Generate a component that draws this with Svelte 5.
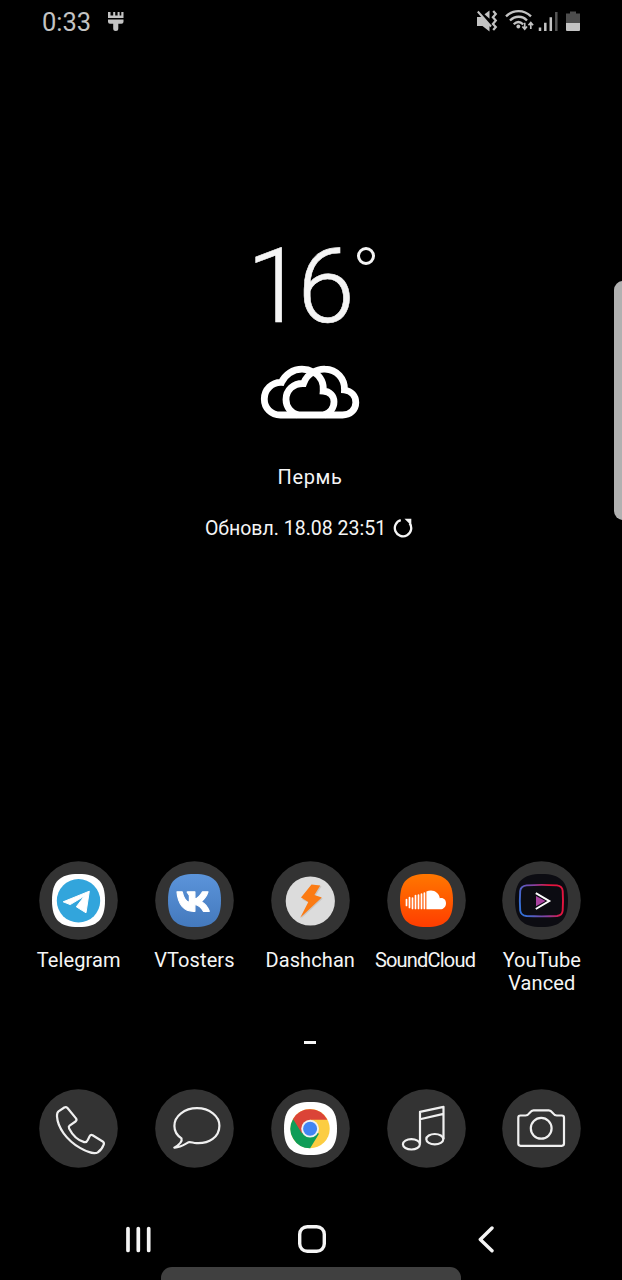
<script>
    const temperature = 16;
    const city = 'Пермь';
    const updated = 'Обновл. 18.08 23:51';

    // Home screen shortcuts
    const apps = [
        { id: 'telegram', label: 'Telegram' },
        { id: 'vtosters', label: 'VTosters' },
        { id: 'dashchan', label: 'Dashchan' },
        { id: 'soundcloud', label: 'SoundCloud' },
        { id: 'vanced', label: 'YouTube Vanced' },
    ];

    // Icons pinned to the dock
    const dock = ['phone', 'messages', 'chrome', 'music', 'camera'];

    // One squircle shared by all adaptive icons
    const squircle = 'M39.5 13C58.5 13 66 20.5 66 39.5S58.5 66 39.5 66 13 58.5 13 39.5 20.5 13 39.5 13Z';
</script>

{#snippet icon(id)}
    <svg class="icon" viewBox="0 0 79 79">
        <circle cx="39.5" cy="39.5" r="39.3" fill="#333" />
        {#if id === 'telegram'}
            <path d={squircle} fill="#fff" />
            <circle cx="39.5" cy="39.8" r="21.7" fill="#32a5dc" />
            <path d="M24.2 40.8 50.3 30.2 47 51.8 37.3 45.8 45.5 35 31.2 43.6Z" fill="#fff" stroke="#fff" stroke-width="1" stroke-linejoin="round" />
        {:else if id === 'vtosters'}
            <defs>
                <linearGradient id="vk" x1="0" y1="0" x2="0" y2="1">
                    <stop offset="0" stop-color="#5b94da" />
                    <stop offset="1" stop-color="#4479bd" />
                </linearGradient>
            </defs>
            <path d={squircle} fill="url(#vk)" />
            <path d="M22 30.8H27.2C28.5 36.5 31 40.5 34.4 41.4V34.5L32.2 31.2Q32 30.8 32.7 30.8H39.9V38.3C43 37.3 45.6 34 47.5 30.8H53C51.8 34.8 49.2 38.2 46.3 40.4 49.5 42.2 52.7 45.6 54.3 50.3H48.4C46.4 46.8 43.6 44.2 39.9 43.5V50.3H38.6C29.2 50.3 23 43.5 22 30.8Z" fill="#fff" stroke="#fff" stroke-width="1.2" stroke-linejoin="round" />
        {:else if id === 'dashchan'}
            <circle cx="39.3" cy="40" r="24.6" fill="#dcdcdc" />
            <path d="M39.5 23 49.8 24.2 43.5 34.2 51 36.5 29.2 56.7 37.3 41 30.5 37.5Z" fill="#b9b3ad" opacity=".55" transform="translate(.8 1)" />
            <path d="M40.5 23.5 49.3 24.5 43.4 34.1 50.8 36.4 29.2 56.7 37.3 41 30 36.5Z" fill="#fb7b14" />
        {:else if id === 'soundcloud'}
            <defs>
                <linearGradient id="sc" x1="0" y1="0" x2="0" y2="1">
                    <stop offset="0" stop-color="#ff7700" />
                    <stop offset="1" stop-color="#ff3d00" />
                </linearGradient>
            </defs>
            <path d={squircle} fill="url(#sc)" />
            <path d="M19.5 38.5V44.5M22.5 36.5V46.5M25.5 37V47.5M28.5 34.5V47.5M31.5 34V47.5M34.5 33V47.5M37.4 32V47.5" stroke="#fff" stroke-width="1.7" stroke-linecap="round" fill="none" />
            <path d="M39.4 30.6C45.5 27.5 52 31.2 52.8 37.2 56.8 36.4 59 39.2 59 42.2 59 45.7 56.6 48.3 53.2 48.3H39.4Z" fill="#fff" />
        {:else if id === 'vanced'}
            <defs>
                <linearGradient id="yt" x1="0" y1=".65" x2="1" y2=".35">
                    <stop offset="0" stop-color="#3470d8" />
                    <stop offset=".48" stop-color="#87409f" />
                    <stop offset=".8" stop-color="#e3143e" />
                </linearGradient>
            </defs>
            <path d={squircle} fill="#0c0c12" />
            <path d="M24.5 24.4Q39.5 23.4 55 24.4 60.3 25 60.7 30 61.3 40 60.7 49.5 60.3 54.3 55 55 39.5 55.8 24.5 55 18.8 54.3 18.2 49.5 17.5 40 18.2 30 18.8 25 24.5 24.4Z" fill="none" stroke="url(#yt)" stroke-width="1.9" />
            <path d="M34 35 43.5 40 34 45.3Z" fill="#a942a0" />
            <path d="M33.8 32.2 47.2 40 33.8 48" fill="none" stroke="#fff" stroke-width="2" />
        {:else if id === 'phone'}
            <path class="line" d="M19.5 22.4 25.3 18.5Q27 17.5 28.5 19L37 29.4Q38.2 31.3 36.5 32.5L30.6 36.7Q29.3 37.8 30.1 39.4C33.5 46 39.5 51.4 45.2 53.1 47.4 53.6 48.2 52.4 48.8 50.9L50.6 47.2Q51.6 45.4 53.6 46.2L63.3 52.2Q65.6 53.8 64.7 55.7C63.6 58.6 61.3 61.8 58.9 63.3 55.7 65.4 48 63 41 58.9 27.5 50.8 18.6 38.5 18 27.4 17.9 25 18.1 23.4 19.5 22.4Z" />
        {:else if id === 'messages'}
            <path class="line" d="M42 19.2C54.5 19.2 64.4 27 64.4 36.7 64.4 47.9 54.3 54.7 41.5 54.1 37.8 53.9 35.8 52.6 33.5 53.2 29.5 55.5 24.6 58.9 19.3 58.6 23.4 56.2 27.5 52.5 26.5 49.3 22.2 46.5 19.4 42 19.4 36.9 19.4 27.2 29.5 19.2 42 19.2Z" />
        {:else if id === 'chrome'}
            <path d={squircle} fill="#fff" />
            <circle cx="39.1" cy="39.7" r="19.6" fill="#fccd42" />
            <path d="M39.1 39.7 48 44.8 39.1 59.3A19.6 19.6 0 0 1 22.1 29.9Z" fill="#0f9d58" />
            <path d="M22.1 29.9A19.6 19.6 0 0 1 56.4 30.8H39.1L31 44.6Z" fill="#db4437" />
            <circle cx="39.1" cy="39.7" r="8.9" fill="#f1f1f1" />
            <circle cx="39.1" cy="39.7" r="7" fill="#4285f4" />
        {:else if id === 'music'}
            <g class="line">
                <path d="M33 54.8V22.8L56.5 17.8V50M33 30.2 56.5 24.9" />
                <ellipse cx="24.4" cy="55.3" rx="8.5" ry="5.2" />
                <ellipse cx="47.8" cy="50.2" rx="8.5" ry="5.2" />
            </g>
        {:else}
            <g class="line">
                <path d="M18.5 26.5H23.5C27.8 26.5 27.5 21.3 31.5 21.3H46.8C50.8 21.3 50.5 26.5 54.8 26.5H59.8Q62 26.5 62 28.7V54.6Q62 56.8 59.8 56.8H18.5Q16.3 56.8 16.3 54.6V28.7Q16.3 26.5 18.5 26.5Z" />
                <circle cx="39.2" cy="39.3" r="10.4" />
            </g>
        {/if}
    </svg>
{/snippet}

<main>
    <header class="status">
        <span class="clock">0:33</span>
        <svg class="brush" width="18" height="20" viewBox="0 0 18 20" fill="#c3c3c3">
            <path d="M1 0H3.5V3.5H6.2V0H8.2V3.5H10.6V0H12.6V3.5H14.3V0H16.5V6H1ZM1 7.6H16.5V9.8Q16.5 11.8 14.5 11.8H11.3V16.5Q11.3 19 8.8 19 6.2 19 6.2 16.5V11.8H3Q1 11.8 1 9.8Z" />
        </svg>
        <svg class="indicators" width="106" height="24" viewBox="0 0 106 24" fill="none" stroke="#c3c3c3">
            <path d="M2 8H7L14.5 15.5V22.5L7.5 17H2Z" fill="#c3c3c3" stroke="none" />
            <path d="M2.8 2.5 16 17.5" stroke-width="2" />
            <path d="M9.5 5.2 14.5 1.5V9.8Z" fill="#c3c3c3" stroke="none" />
            <path d="M18.2 2 20.8 5 17.9 8.3 20.8 11.5 17.9 15 20.8 18 18.2 21" stroke-width="2.2" />
            <path d="M31 7.4C38 .4 49 .4 56 7.4M35 11.5C40 6.5 47.5 6.5 52 11.5M38.7 15.3Q43.3 10.8 48.2 15.3" stroke-width="2.3" />
            <circle cx="43.3" cy="17.5" r="1.9" fill="#c3c3c3" stroke="none" />
            <path d="M49.7 13.8V20M47.4 17.5 49.7 20.2 52 17.5M55.8 20V14M53.5 16.2 55.8 13.5 58.1 16.2" stroke-width="1.7" />
            <path d="M65 18.5V22M70.3 13.8V22M75.8 8.2V22" stroke-width="2.5" />
            <path d="M81.3 3V22" stroke="#555" stroke-width="2.5" />
            <path d="M91 4.5H95V2.5H101V4.5H105V14H91Z" fill="#4d4d4d" stroke="none" />
            <path d="M91 14H105V21Q105 22 104 22H92Q91 22 91 21Z" fill="#c3c3c3" stroke="none" />
        </svg>
    </header>

    <section class="weather">
        <div class="temperature">{temperature}<span class="degree"></span></div>
        <svg class="clouds" width="100" height="56" viewBox="0 0 100 56">
            <path d="M20.5 51C11 51 4.3 44 4.3 35 4.3 25.5 12 18 21.5 18.4 25 10.5 33 5.2 42 5.2 47 5.2 50.5 6.5 53.8 8.2 57 6 61 5 65 5.2 77 5.5 85 15 84.5 26 91 27 95.8 31.8 95.8 38.5 95.8 46 90 51 82.5 51Z" />
            <path d="M38 51C31 49 26 43 26 35.5 26 26 33.5 19.2 43.5 19.5 45.5 14 49.2 10 53.8 8 60 12 64 18 63.2 27 70 27.5 74 32 74 37.8 74 44 70 49 64 51" />
        </svg>
        <div class="city">{city}</div>
        <div class="updated">
            <span>{updated}</span>
            <svg width="20" height="20" viewBox="0 0 20 20">
                <path d="M7.8 2.2A8.2 8.2 0 1 0 16.6 5.2" fill="none" stroke="#f5f5f5" stroke-width="2.3" />
                <path d="M11.5.8H18.3V7.5Z" fill="#f5f5f5" />
            </svg>
        </div>
    </section>

    <section class="apps">
        {#each apps as app}
            <div class="app">
                {@render icon(app.id)}
                <span class="label {app.id}">{app.label}</span>
            </div>
        {/each}
    </section>

    <div class="page-mark"></div>

    <section class="dock">
        {#each dock as id}
            {@render icon(id)}
        {/each}
    </section>

    <nav>
        <svg width="26" height="28" viewBox="0 0 26 28">
            <path d="M2 3.5V25.5M12.3 3.5V25.5M22.7 3.5V25.5" stroke-width="3.7" />
        </svg>
        <svg class="home" width="28" height="28" viewBox="0 0 28 28">
            <rect x="1.7" y="1.7" width="24.6" height="24.6" rx="7.5" stroke-width="3.4" />
        </svg>
        <svg width="18" height="28" viewBox="0 0 18 28">
            <path d="M14 3 2.3 14.5 14 25.8" stroke-width="3.4" stroke-linejoin="round" />
        </svg>
    </nav>

    <div class="edge-handle"></div>
    <div class="bottom-handle"></div>
</main>

<style>
    :global(body) {
        background: #000;
    }

    main {
        position: relative;
        display: flex;
        flex-direction: column;
        width: 622px;
        height: 1280px;
        overflow: hidden;
        background: #000;
        color: #f5f5f5;
        font-family: Roboto, sans-serif;
    }

    svg {
        display: block;
        flex: none;
    }

    .status {
        display: flex;
        align-items: flex-start;
        height: 44px;
        padding: 0 41px 0 42px;
        box-sizing: border-box;
    }

    .clock {
        width: 65px;
        padding-top: 7px;
        color: #c3c3c3;
        font-size: 25.5px;
        line-height: 30px;
    }

    .brush {
        margin-top: 12px;
    }

    .indicators {
        margin: 9px 0 0 auto;
    }

    .weather {
        display: flex;
        flex-direction: column;
        align-items: center;
        height: 817px;
        padding: 183px 2px 0 0;
        box-sizing: border-box;
    }

    .temperature {
        display: flex;
        height: 137px;
        padding-left: 2px;
        font-size: 103px;
        font-weight: 300;
        line-height: 120px;
        letter-spacing: -6.5px;
        -webkit-text-stroke: 0.6px #f5f5f5;
    }

    .degree {
        width: 18px;
        height: 18px;
        margin: 20px 0 0 9px;
        border: 3.8px solid #f5f5f5;
        border-radius: 50%;
        box-sizing: border-box;
    }

    .clouds {
        fill: none;
        stroke: #fff;
        stroke-width: 6.8;
    }

    .city {
        margin-top: 45px;
        font-size: 20px;
        line-height: 24px;
        letter-spacing: 0.6px;
    }

    .updated {
        display: flex;
        align-items: center;
        gap: 7px;
        margin-top: 27px;
        padding-right: 2px;
        font-size: 19.5px;
        line-height: 26px;
    }

    .updated svg {
        margin-bottom: 2px;
    }

    .apps,
    .dock {
        display: grid;
        grid-template-columns: repeat(5, 115.8px);
        justify-content: center;
        padding-right: 1.5px;
    }

    .apps {
        height: 180px;
    }

    .app {
        display: flex;
        flex-direction: column;
        align-items: center;
    }

    .icon {
        width: 79px;
        height: 79px;
        justify-self: center;
    }

    .line {
        fill: none;
        stroke: #f0f0f0;
        stroke-width: 2.2;
        stroke-linejoin: round;
    }

    .label {
        width: 105px;
        margin-top: 9px;
        font-size: 20px;
        line-height: 23.4px;
        letter-spacing: 0.1px;
        text-align: center;
    }

    .label.soundcloud {
        letter-spacing: -0.8px;
        text-indent: -2px;
    }

    .page-mark {
        width: 12px;
        height: 3px;
        margin: 0 0 44.5px 304px;
        background: #f5f5f5;
    }

    nav {
        display: flex;
        justify-content: space-between;
        padding: 57px 126px 0;
    }

    nav svg {
        fill: none;
        stroke: #f5f5f5;
        stroke-linecap: round;
    }

    .home {
        margin-right: 6px;
    }

    .edge-handle {
        position: absolute;
        top: 281px;
        right: -10px;
        width: 18px;
        height: 239px;
        border-radius: 9px;
        background: #b1b1b1;
    }

    .bottom-handle {
        position: absolute;
        bottom: -10px;
        left: 161px;
        width: 300px;
        height: 23px;
        border-radius: 11px;
        background: #404040;
    }
</style>
